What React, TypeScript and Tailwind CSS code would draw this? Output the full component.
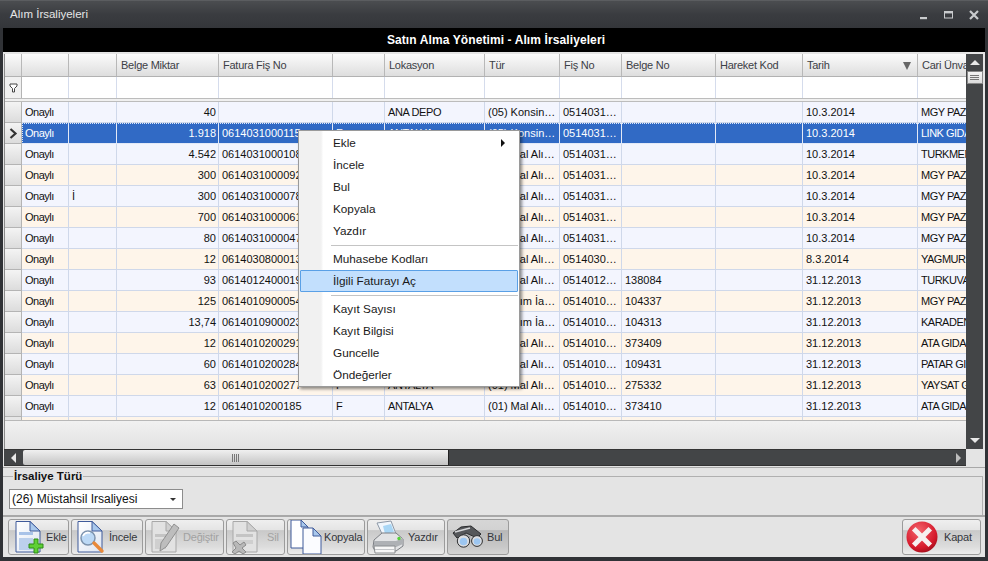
import React from "react";

const COLS = "grid grid-cols-[17px_47px_48px_102px_114px_52px_100px_75px_62px_94px_87px_115px_49px]";

type Row = string[];
const rows: Row[] = [
  ["40", "", "", "ANA DEPO", "(05) Konsin…", "0514031…", "", "10.3.2014", "MGY PAZA", ""],
  ["1.918", "0614031000115", "F", "ANTALYA", "(05) Konsin…", "0514031…", "", "10.3.2014", "LINK GIDA", ""],
  ["4.542", "0614031000108", "F", "ANTALYA", "(01) Mal Alı…", "0514031…", "", "10.3.2014", "TURKMEN", ""],
  ["300", "0614031000092", "F", "ANTALYA", "(01) Mal Alı…", "0514031…", "", "10.3.2014", "MGY PAZA", ""],
  ["300", "0614031000078", "F", "ANTALYA", "(01) Mal Alı…", "0514031…", "", "10.3.2014", "MGY PAZA", "İ"],
  ["700", "0614031000061", "F", "ANTALYA", "(01) Mal Alı…", "0514031…", "", "10.3.2014", "MGY PAZA", ""],
  ["80", "0614031000047", "F", "ANTALYA", "(01) Mal Alı…", "0514031…", "", "10.3.2014", "MGY PAZA", ""],
  ["12", "0614030800013", "F", "ANTALYA", "(01) Mal Alı…", "0514030…", "", "8.3.2014", "YAGMUR", ""],
  ["93", "0614012400019", "F", "ANTALYA", "(01) Mal Alı…", "0514012…", "138084", "31.12.2013", "TURKUVA", ""],
  ["125", "0614010900054", "F", "ANTALYA", "(08) Alım İa…", "0514010…", "104337", "31.12.2013", "MGY PAZA", ""],
  ["13,74", "0614010900023", "F", "ANTALYA", "(08) Alım İa…", "0514010…", "104313", "31.12.2013", "KARADEN", ""],
  ["12", "0614010200291", "F", "ANTALYA", "(01) Mal Alı…", "0514010…", "373409", "31.12.2013", "ATA GIDA", ""],
  ["60", "0614010200284", "F", "ANTALYA", "(01) Mal Alı…", "0514010…", "109431", "31.12.2013", "PATAR GI", ""],
  ["63", "0614010200277", "F", "ANTALYA", "(01) Mal Alı…", "0514010…", "275332", "31.12.2013", "YAYSAT G", ""],
  ["12", "0614010200185", "F", "ANTALYA", "(01) Mal Alı…", "0514010…", "373410", "31.12.2013", "ATA GIDA", ""],
];

const headers = ["", "", "", "Belge Miktar", "Fatura Fiş No", "", "Lokasyon", "Tür", "Fiş No", "Belge No", "Hareket Kod", "Tarih", "Cari Ünvan"];

function Cell({ children, right, sel, className = "" }: { children?: React.ReactNode; right?: boolean; sel?: boolean; className?: string }) {
  return (
    <div
      className={`overflow-hidden whitespace-nowrap border-r border-b leading-[20px] ${
        sel ? "border-[#e4e9f6]" : "border-[#cfd8ea]"
      } ${right ? "text-right pr-[2px]" : "pl-[3px]"} ${className}`}
    >
      {children}
    </div>
  );
}

function DataRow({ r, i }: { r: Row; i: number }) {
  const sel = i === 1;
  const bg = sel ? "bg-[#316ac5] text-white" : i % 2 === 0 ? "bg-[#f3f5fe] text-[#111]" : "bg-[#fef5ea] text-[#111]";
  return (
    <div className={`${COLS} h-[21px] shrink-0`}>
      <div className="bg-gradient-to-b from-[#f4f4f4] to-[#dcdcdc] border-r border-b border-[#b4b4b4] flex items-center justify-center">
        {sel && (
          <svg width="9" height="11" viewBox="0 0 9 11">
            <path d="M1.5 1 L6.5 5.5 L1.5 10" fill="none" stroke="#333" strokeWidth="2.2" />
          </svg>
        )}
      </div>
      <div className={`col-span-12 grid grid-cols-[47px_48px_102px_114px_52px_100px_75px_62px_94px_87px_115px_49px] ${bg} ${sel ? "outline-1 -outline-offset-1 outline-dotted outline-[#dfe8f8]" : ""}`}>
        <Cell sel={sel} className="tracking-[-0.5px]">Onaylı</Cell>
        <Cell sel={sel}>{r[9]}</Cell>
        <Cell sel={sel} right>{r[0]}</Cell>
        <Cell sel={sel}>{r[1]}</Cell>
        <Cell sel={sel}>{r[2]}</Cell>
        <Cell sel={sel} className="tracking-[-0.4px]">{r[3]}</Cell>
        <Cell sel={sel}>{r[4]}</Cell>
        <Cell sel={sel}>{r[5]}</Cell>
        <Cell sel={sel}>{r[6]}</Cell>
        <Cell sel={sel}></Cell>
        <Cell sel={sel}>{r[7]}</Cell>
        <Cell sel={sel} className="tracking-[-0.5px]">{r[8]}</Cell>
      </div>
    </div>
  );
}

function DocBase({ dim, children }: { dim?: boolean; children?: React.ReactNode }) {
  const line = dim ? "#a8a8a8" : "#3f5a9a";
  return (
    <svg width="36" height="36" viewBox="0 0 36 36" className="shrink-0">
      <defs>
        <linearGradient id="docf" x1="0" y1="0" x2="1" y2="1">
          <stop offset="0" stopColor="#ffffff" />
          <stop offset="1" stopColor="#dfe6f2" />
        </linearGradient>
      </defs>
      <path d="M6 2.5 H20 L30 12 V33 H6 Z" fill={dim ? "#e2e2e2" : "url(#docf)"} stroke={line} strokeWidth="1" />
      <path d="M20 2.5 V12 H30 Z" fill={dim ? "#d0d0d0" : "#a9c8ec"} stroke={line} strokeWidth="1" />
      {children}
    </svg>
  );
}

const IconEkle = () => (
  <DocBase>
    <rect x="9" y="13" width="14" height="3" fill="#a9c3e8" />
    <rect x="9" y="19" width="14" height="12" fill="#bcd0ec" />
    <path d="M24 20 h4 v5 h5 v4 h-5 v5 h-4 v-5 h-5 v-4 h5 Z" fill="#5fd035" stroke="#2c8a17" strokeWidth="1" />
  </DocBase>
);
const IconIncele = () => (
  <DocBase>
    <circle cx="16" cy="19" r="7" fill="#bcd9f6" stroke="#7d93ad" strokeWidth="1.5" />
    <path d="M11 17 a6 6 0 0 1 7 -3" stroke="#fff" strokeWidth="1.6" fill="none" />
    <path d="M22 24 L30 32" stroke="#e8893a" strokeWidth="3.4" strokeLinecap="round" />
  </DocBase>
);
const IconDegistir = () => (
  <DocBase dim>
    <rect x="9" y="15" width="16" height="3" fill="#c4c4c4" />
    <rect x="9" y="20" width="11" height="10" fill="#cfcfcf" />
    <path d="M28 5 L33 9 L20 28 L14 32 L15 24 Z" fill="#bdbdbd" stroke="#8f8f8f" strokeWidth="1" />
  </DocBase>
);
const IconSil = () => (
  <DocBase dim>
    <rect x="9" y="15" width="17" height="3" fill="#c4c4c4" />
    <rect x="9" y="21" width="17" height="4" fill="#cfcfcf" />
    <path d="M6 24 L9 22 L13 26 L17 23 L19 26 L15 29 L19 33 L16 35 L12 32 L8 35 L5 33 L9 29 Z" fill="#b8b8b8" stroke="#8a8a8a" strokeWidth="1" />
  </DocBase>
);
const IconKopyala = () => (
  <svg width="32" height="36" viewBox="0 0 32 36" className="shrink-0">
    <path d="M1 1 H11 L18 8 V29 H1 Z" fill="#fff" stroke="#3f5a9a" />
    <path d="M11 1 V8 H18 Z" fill="#a9c8ec" stroke="#3f5a9a" />
    <path d="M13 9 H23 L31 17 V35 H13 Z" fill="#fbfcff" stroke="#3f5a9a" />
    <path d="M23 9 V17 H31 Z" fill="#a9c8ec" stroke="#3f5a9a" />
  </svg>
);
const IconYazdir = () => (
  <svg width="32" height="34" viewBox="0 0 32 34" className="shrink-0">
    <path d="M5 3 L19 1 L24 14 L11 16 Z" fill="#f0f6fc" stroke="#8d98a6" />
    <path d="M11 6 L19 4 L22 12 L13 14 Z" fill="#a8d6f5" />
    <path d="M2 20 L10 13 H24 L31 19 V26 L24 31 H3 L1 27 Z" fill="#e2e3e5" stroke="#7c7f84" />
    <path d="M2 21 H24 L31 18 V24 L24 27 H2 Z" fill="#aeb1b5" />
    <path d="M2 26 H23 V33 H3 Z" fill="#f7f7f7" stroke="#8a8d90" />
    <path d="M3 29.5 H22" stroke="#c4c6c9" />
    <circle cx="27" cy="18.5" r="1.7" fill="#56d13a" />
  </svg>
);
const IconBul = () => (
  <svg width="32" height="24" viewBox="0 0 32 24" className="shrink-0">
    <path d="M1 8 L9 2 L19 1 L29 9 L25 13 L14 8 L5 13 Z" fill="#55575a" stroke="#2a2b2d" />
    <path d="M3 7 L18 3" stroke="#d6d7d9" strokeWidth="1.6" />
    <path d="M6 13 L13 9 L19 12 L14 14 Z" fill="#8f9194" />
    <circle cx="11.5" cy="16" r="6.2" fill="#dcdde0" stroke="#2f3032" strokeWidth="1" />
    <circle cx="11.5" cy="16.5" r="3.8" fill="#9cc6f1" />
    <circle cx="25" cy="16" r="5.4" fill="#dcdde0" stroke="#2f3032" strokeWidth="1" />
    <circle cx="25" cy="16.5" r="3.3" fill="#9cc6f1" />
  </svg>
);
const IconKapat = () => (
  <svg width="32" height="32" viewBox="0 0 32 32" className="shrink-0">
    <defs>
      <radialGradient id="rk" cx="0.4" cy="0.3" r="0.8">
        <stop offset="0" stopColor="#f4646c" />
        <stop offset="0.7" stopColor="#d5182a" />
        <stop offset="1" stopColor="#8f0c18" />
      </radialGradient>
    </defs>
    <circle cx="16" cy="16" r="15.5" fill="url(#rk)" />
    <path d="M9.5 9.5 L22.5 22.5 M22.5 9.5 L9.5 22.5" stroke="#f6f0f0" strokeWidth="5" strokeLinecap="square" />
  </svg>
);

function ToolButton({ w, icon, label, dim, pad, active }: { w: string; icon: React.ReactNode; label: string; dim?: boolean; pad: string; active?: boolean }) {
  return (
    <div
      className={`${w} ${pad} h-[36px] flex items-center rounded-[3px] border border-[#9b9b9b] overflow-hidden ${
        active
          ? "bg-[linear-gradient(#d6d6d6_0%,#d2d2d2_30%,#b8b8b8_31%,#c8c8c8_78%,#d4d4d4_100%)]"
          : "bg-[linear-gradient(#efefef_0%,#e4e4e4_30%,#c9c9c9_31%,#dcdcdc_78%,#ececec_100%)]"
      } ${dim ? "text-[#a2a2a2]" : "text-[#33363b]"}`}
    >
      {icon}
      <span className="whitespace-nowrap tracking-[-0.2px]">{label}</span>
    </div>
  );
}

function MenuItem({ label, active, arrow }: { label: string; active?: boolean; arrow?: boolean }) {
  return (
    <div
      className={`h-[22px] flex items-center pl-[32px] mx-px rounded-[1px] relative border ${
        active ? "bg-[#c2dffd] border-[#5aa0e6]" : "border-transparent"
      }`}
    >
      <span>{label}</span>
      {arrow && <span className="absolute right-[12px] top-[6px] w-0 h-0 border-y-[4px] border-y-transparent border-l-[4px] border-l-[#111]" />}
    </div>
  );
}

export default function App() {
  return (
    <div className="relative w-[988px] h-[561px] overflow-hidden bg-[#303236] text-[11px] font-['Liberation_Sans',Arial,sans-serif] flex flex-col">
      {/* title bar */}
      <div className="h-[28px] shrink-0 flex items-center justify-between pl-[10px] pr-[9px] bg-gradient-to-b from-[#4b4d50] via-[#3a3c40] to-[#34363a] text-[#e6e6e6] text-[11.5px] border-t border-[#5b5d60]">
        <span className="pt-px">Alım İrsaliyeleri</span>
        <div className="flex items-center gap-[15px] translate-x-px">
          <svg width="10" height="10" viewBox="0 0 10 10"><rect x="1" y="7" width="7" height="2.2" fill="#c9cbcd" /></svg>
          <svg width="10" height="10" viewBox="0 0 10 10"><rect x="0.5" y="1.5" width="8" height="6.5" fill="none" stroke="#c9cbcd" /><rect x="0.5" y="1" width="8" height="2.4" fill="#c9cbcd" /></svg>
          <svg width="11" height="10" viewBox="0 0 11 10"><path d="M1 1 L9 9 M9 1 L1 9" stroke="#c9cbcd" strokeWidth="2.2" /></svg>
        </div>
      </div>

      <div className="flex-1 flex flex-col mx-[3px] mb-[4px] bg-[#e4e4e4] min-h-0">
        {/* black heading */}
        <div className="h-[24px] shrink-0 bg-black text-white font-bold text-[12px] tracking-[0.1px] flex items-center justify-center pl-[4px]">
          Satın Alma Yönetimi - Alım İrsaliyeleri
        </div>

        {/* grid + scrollbars */}
        <div className="h-[414px] shrink-0 flex flex-col pr-[2px] pt-[2px] bg-[#e4e4e4]">
          <div className="flex h-[395px] shrink-0">
            <div className="w-[962px] ml-[1px] overflow-hidden flex flex-col border-l border-[#8a8a8a] bg-[#ececec]">
              {/* header */}
              <div className={`${COLS} h-[23px] shrink-0 border-b border-[#b2b2b2]`}>
                {headers.map((h, i) => (
                  <div
                    key={i}
                    className="relative overflow-hidden whitespace-nowrap pl-[4px] border-r border-[#b8b8b8] leading-[22px] tracking-[-0.25px] text-[#3c4046] bg-gradient-to-b from-[#fbfbfb] to-[#dedede]"
                  >
                    {h}
                    {h === "Tarih" && (
                      <span className="absolute right-[6px] top-[8px] w-0 h-0 border-x-[4px] border-x-transparent border-t-[8px] border-t-[#666]" />
                    )}
                  </div>
                ))}
              </div>
              {/* filter */}
              <div className={`${COLS} h-[21px] shrink-0 bg-white`}>
                <div className="border-r border-[#b4b4b4] bg-[#f0f0f0] flex items-center justify-center">
                  <svg width="9" height="10" viewBox="0 0 9 10">
                    <path d="M1 1 H8 V3 L5.5 5.5 V9 H3.5 V5.5 L1 3 Z" fill="#fff" stroke="#444" strokeWidth="1" />
                  </svg>
                </div>
                {headers.slice(1).map((_, i) => (
                  <div key={i} className="border-r border-[#d5dcec]" />
                ))}
              </div>
              <div className="h-[4px] shrink-0 border-y border-[#bcbcbc] bg-[#f0f0f0]" />
              {rows.map((r, i) => (
                <DataRow key={i} r={r} i={i} />
              ))}
              <div className={`${COLS} h-[4px] shrink-0 bg-[#fef5ea] border-b border-[#b8b8b8]`}>
                <div className="bg-[#e6e6e6] border-r border-[#b4b4b4]" />
                {headers.slice(1).map((_, i) => (
                  <div key={i} className="border-r border-[#cfd8ea]" />
                ))}
              </div>
              <div className="flex-1 bg-gradient-to-b from-[#f1f1f1] to-[#e2e2e2]" />
            </div>
            {/* vertical scrollbar */}
            <div className="w-[17px] shrink-0 bg-[#434547] flex flex-col items-center">
              <div className="h-[17px] flex items-center justify-center shrink-0">
                <span className="w-0 h-0 border-x-[5px] border-x-transparent border-b-[5px] border-b-[#e8e8e8]" />
              </div>
              <div className="w-[16px] h-[13px] shrink-0 bg-gradient-to-b from-[#f4f4f4] to-[#dcdcdc] border border-[#888] flex flex-col gap-px items-center justify-center">
                <span className="w-[9px] h-px bg-[#777]" />
                <span className="w-[9px] h-px bg-[#777]" />
                <span className="w-[9px] h-px bg-[#777]" />
              </div>
              <div className="flex-1" />
              <div className="h-[17px] flex items-center justify-center shrink-0">
                <span className="w-0 h-0 border-x-[5px] border-x-transparent border-t-[5px] border-t-[#e8e8e8]" />
              </div>
            </div>
          </div>
          {/* horizontal scrollbar */}
          <div className="h-[17px] w-[962px] ml-[1px] shrink-0 flex bg-[#434547] items-stretch border-y border-[#333]">
            <div className="w-[19px] flex items-center justify-center shrink-0">
              <span className="w-0 h-0 border-y-[5px] border-y-transparent border-r-[5px] border-r-[#e8e8e8]" />
            </div>
            <div className="w-[426px] shrink-0 rounded-l-[2px] bg-gradient-to-b from-[#f0f0f0] to-[#c4c4c4] flex items-center justify-center gap-px border-r border-[#222]">
              <span className="w-px h-[8px] bg-[#777]" />
              <span className="w-px h-[8px] bg-[#777]" />
              <span className="w-px h-[8px] bg-[#777]" />
              <span className="w-px h-[8px] bg-[#777]" />
            </div>
            <div className="flex-1" />
            <div className="w-[16px] flex items-center justify-center shrink-0">
              <span className="w-0 h-0 border-y-[5px] border-y-transparent border-l-[5px] border-l-[#bdbdbd]" />
            </div>
          </div>
        </div>

        {/* group box */}
        <div className="h-[49px] shrink-0 border-y border-[#a8a8a8] flex flex-col mt-[1px]">
          <fieldset className="mt-[1px] flex-1 border-t border-r border-[#b0b0b0] pl-[7px] mr-[2px]">
            <legend className="ml-[3px] px-[1px] font-bold text-[11.5px] leading-[14px] text-[#111]">İrsaliye Türü</legend>
            <div className="w-[174px] h-[20px] mt-[6px] -ml-px bg-white border border-[#8c8c8c] flex items-center justify-between pl-[2px] pr-[6px] text-[12px] text-[#111]">
              <span>(26) Müstahsil Irsaliyesi</span>
              <span className="w-0 h-0 border-x-[3px] border-x-transparent border-t-[3px] border-t-[#333]" />
            </div>
          </fieldset>
        </div>

        {/* toolbar */}
        <div className="flex-1 flex items-center justify-between pl-[5px] pr-[4px] border-t border-[#a8a8a8]">
          <div className="flex items-center gap-[2px]">
            <ToolButton w="w-[61px]" pad="pl-[1px]" icon={<IconEkle />} label="Ekle" />
            <ToolButton w="w-[72px]" pad="gap-[1px]" icon={<IconIncele />} label="İncele" />
            <ToolButton w="w-[79px]" pad="gap-[1px]" dim icon={<IconDegistir />} label="Değiştir" />
            <ToolButton w="w-[59px]" pad="gap-[4px]" dim icon={<IconSil />} label="Sil" />
            <ToolButton w="w-[78px]" pad="pl-[2px] gap-[2px]" icon={<IconKopyala />} label="Kopyala" />
            <ToolButton w="w-[78px]" pad="pl-[4px] gap-[4px]" icon={<IconYazdir />} label="Yazdır" />
            <ToolButton w="w-[62px]" pad="pl-[4px] gap-[3px]" active icon={<IconBul />} label="Bul" />
          </div>
          <ToolButton w="w-[79px]" pad="pl-[3px] gap-[6px]" icon={<IconKapat />} label="Kapat" />
        </div>
      </div>

      {/* context menu */}
      <div className="absolute left-[298px] top-[130px] w-[222px] h-[257px] bg-gradient-to-r from-[#f1f1f1] from-[10%] to-white to-[11%] border border-[#9a9a9a] shadow-[2px_2px_3px_rgba(0,0,0,0.45)] py-px text-[11.75px] text-[#1a1a1a]">
        <MenuItem label="Ekle" arrow />
        <MenuItem label="İncele" />
        <MenuItem label="Bul" />
        <MenuItem label="Kopyala" />
        <MenuItem label="Yazdır" />
        <div className="h-[6px] ml-[32px] mr-px flex items-center"><div className="h-px w-full bg-[#c4c4c4]" /></div>
        <MenuItem label="Muhasebe Kodları" />
        <MenuItem label="İlgili Faturayı Aç" active />
        <div className="h-[6px] ml-[32px] mr-px flex items-center"><div className="h-px w-full bg-[#c4c4c4]" /></div>
        <MenuItem label="Kayıt Sayısı" />
        <MenuItem label="Kayıt Bilgisi" />
        <MenuItem label="Guncelle" />
        <MenuItem label="Öndeğerler" />
      </div>
    </div>
  );
}
